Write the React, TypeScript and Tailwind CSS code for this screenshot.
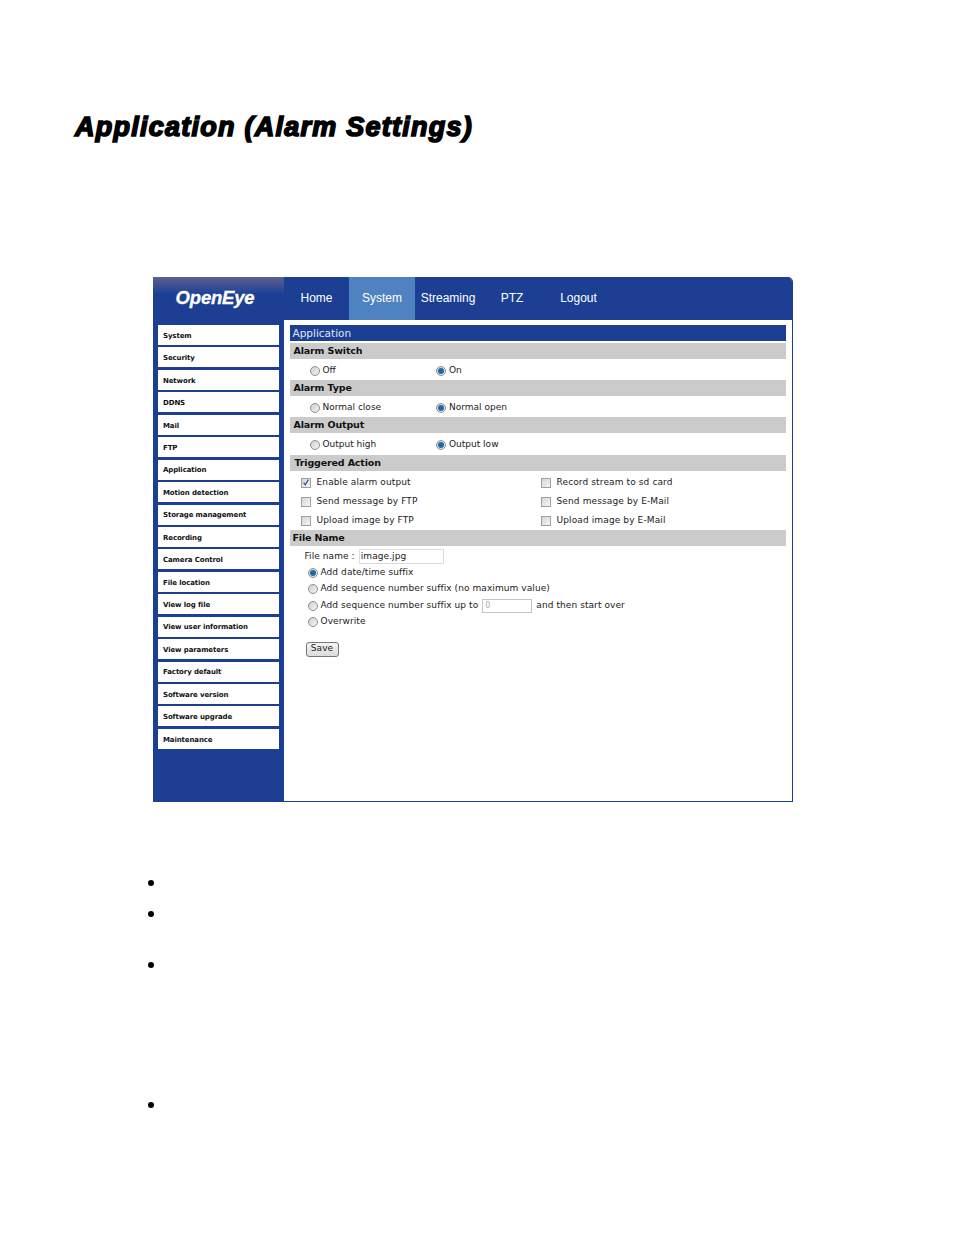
import React from "react";

const sideItems = [
  "System", "Security", "Network", "DDNS", "Mail", "FTP", "Application", "Motion detection",
  "Storage management", "Recording", "Camera Control", "File location", "View log file",
  "View user information", "View parameters", "Factory default", "Software version",
  "Software upgrade", "Maintenance",
];

const tabs = [
  { label: "Home", w: "w-[65px]" },
  { label: "System", w: "w-[66px]", active: true },
  { label: "Streaming", w: "w-[66px]" },
  { label: "PTZ", w: "w-[62px]" },
  { label: "Logout", w: "w-[71px]" },
];

const Radio = ({ on }: { on?: boolean }) => (
  <span className="w-[10px] h-[10px] rounded-full border border-[#8f8f8f] bg-gradient-to-br from-[#cfcfcf] to-[#f4f4f4] flex items-center justify-center shrink-0">
    {on && <span className="w-[6px] h-[6px] rounded-full bg-[#1f6aa5]" />}
  </span>
);

const Check = ({ on }: { on?: boolean }) => (
  <span className="w-[10px] h-[10px] border border-[#a0a0a0] bg-gradient-to-br from-[#d4d4d4] to-[#f6f6f6] flex items-center justify-center shrink-0">
    {on && (
      <svg viewBox="0 0 10 10" className="w-[9px] h-[9px]">
        <path d="M2 5 L4 8 L8 1.5" fill="none" stroke="#3d5a98" strokeWidth="1.6" />
      </svg>
    )}
  </span>
);

const Bar = ({ label, pl = "pl-1" }: { label: string; pl?: string }) => (
  <div className={`h-4 bg-[#cbcbcb] ${pl} flex items-center font-bold text-[9.5px] tracking-[-0.15px] text-[#111]`}>{label}</div>
);

const RadioRow = ({ a, b, h }: { a: string; b: string; h: string }) => (
  <div className={`${h} pt-[2px] flex items-center text-[9px]`}>
    <div className="w-[146.5px] pl-5 flex items-center gap-[3px]">
      <Radio />
      <span>{a}</span>
    </div>
    <div className="flex items-center gap-[3px]">
      <Radio on />
      <span>{b}</span>
    </div>
  </div>
);

const CheckItem = ({ label, on }: { label: string; on?: boolean }) => (
  <div className="w-[240px] flex items-center gap-[5.5px]">
    <Check on={on} />
    <span>{label}</span>
  </div>
);

const FileRadio = ({ on, h = "h-4", children }: { on?: boolean; h?: string; children: React.ReactNode }) => (
  <div className={`${h} pl-[18px] flex items-center gap-[3px]`}>
    <Radio on={on} />
    {children}
  </div>
);

export default function App() {
  return (
    <div className="w-[954px] h-[1248px] bg-white overflow-hidden font-['DejaVu_Sans',sans-serif] text-[#222]">
      <h1 className="pt-[111px] pl-[75px] h-[277px] font-['Liberation_Sans',sans-serif] font-bold italic text-[27px] leading-[32px] text-black tracking-[1.25px] [-webkit-text-stroke:1.6px_black]">
        Application (Alarm Settings)
      </h1>

      <div className="ml-[153px] w-[640px] h-[525px] flex flex-col border-r border-b border-[#1c3f94] rounded-tr-[5px] overflow-hidden">
        <div className="h-[43px] bg-[#1c3f94] flex shrink-0 font-['Liberation_Sans',sans-serif] text-white text-[12px]">
          <div className="w-[131px] bg-gradient-to-b from-[#5b608f] to-[#1c3f94] to-40% flex items-center justify-center pb-[2px] pr-[7px]">
            <span className="font-bold italic text-[18.5px] tracking-[-0.2px] [-webkit-text-stroke:0.3px_white]">OpenEye</span>
          </div>
          {tabs.map((t) => (
            <div key={t.label} className={`${t.w} pb-[2px] flex items-center justify-center ${t.active ? "bg-[#4e82c0]" : ""}`}>
              {t.label}
            </div>
          ))}
        </div>

        <div className="flex flex-1">
          <div className="w-[131px] bg-[#1c3f94] pt-[5px] px-[5px] flex flex-col gap-[2.45px] shrink-0">
            {sideItems.map((s) => (
              <div key={s} className="h-5 bg-white pl-[5px] pt-[2px] flex items-center font-bold text-[7px] tracking-[-0.12px] text-[#111]">
                {s}
              </div>
            ))}
          </div>

          <div className="flex-1 bg-white pt-[5px] pl-[5.5px] pr-[6.5px] text-[9px]">
            <div className="h-4 bg-[#1c3f94] text-[#dfe6f4] text-[10.5px] pl-[3px] pt-[1px] flex items-center mb-[2px]">Application</div>
            <Bar label="Alarm Switch" />
            <RadioRow a="Off" b="On" h="h-[21px]" />
            <Bar label="Alarm Type" />
            <RadioRow a="Normal close" b="Normal open" h="h-[21px]" />
            <Bar label="Alarm Output" />
            <RadioRow a="Output high" b="Output low" h="h-[22px]" />
            <Bar label="Triggered Action" pl="pl-[5px]" />
            <div className="pl-[11.5px] pt-[2px] h-[59px] grid grid-rows-[19px_19px_19px] items-center tracking-[0.12px]">
              <div className="flex"><CheckItem label="Enable alarm output" on /><CheckItem label="Record stream to sd card" /></div>
              <div className="flex"><CheckItem label="Send message by FTP" /><CheckItem label="Send message by E-Mail" /></div>
              <div className="flex"><CheckItem label="Upload image by FTP" /><CheckItem label="Upload image by E-Mail" /></div>
            </div>
            <Bar label="File Name" pl="pl-[3px]" />
            <div className="tracking-[0.08px]">
              <div className="pl-[15px] h-[19px] pt-[2px] flex items-center gap-[4px]">
                <span>File name :</span>
                <span className="w-[85px] h-[15px] border border-[#dcdcdc] pl-[1px] flex items-center">image.jpg</span>
              </div>
              <FileRadio on><span>Add date/time suffix</span></FileRadio>
              <FileRadio><span>Add sequence number suffix (no maximum value)</span></FileRadio>
              <FileRadio h="h-[17px]">
                <span>Add sequence number suffix up to</span>
                <span className="w-[50px] h-[14px] border border-[#c4c4c4] pl-[2px] text-[#aaa] text-[8px] flex items-center ml-[1px]">0</span>
                <span className="ml-[1px]">and then start over</span>
              </FileRadio>
              <FileRadio><span>Overwrite</span></FileRadio>
              <button className="ml-[16px] mt-[11.5px] w-[33px] h-[15px] border border-[#777] rounded-[3px] bg-gradient-to-b from-[#f4f4f4] to-[#dcdcdc] text-[9px] flex items-center justify-center">Save</button>
            </div>
          </div>
        </div>
      </div>

      <ul className="pl-[148px] pt-[78px] flex flex-col">
        <li className="w-[6px] h-[6px] rounded-full bg-black" />
        <li className="w-[6px] h-[6px] rounded-full bg-black mt-[25px]" />
        <li className="w-[6px] h-[6px] rounded-full bg-black mt-[45px]" />
        <li className="w-[6px] h-[6px] rounded-full bg-black mt-[134px]" />
      </ul>
    </div>
  );
}
